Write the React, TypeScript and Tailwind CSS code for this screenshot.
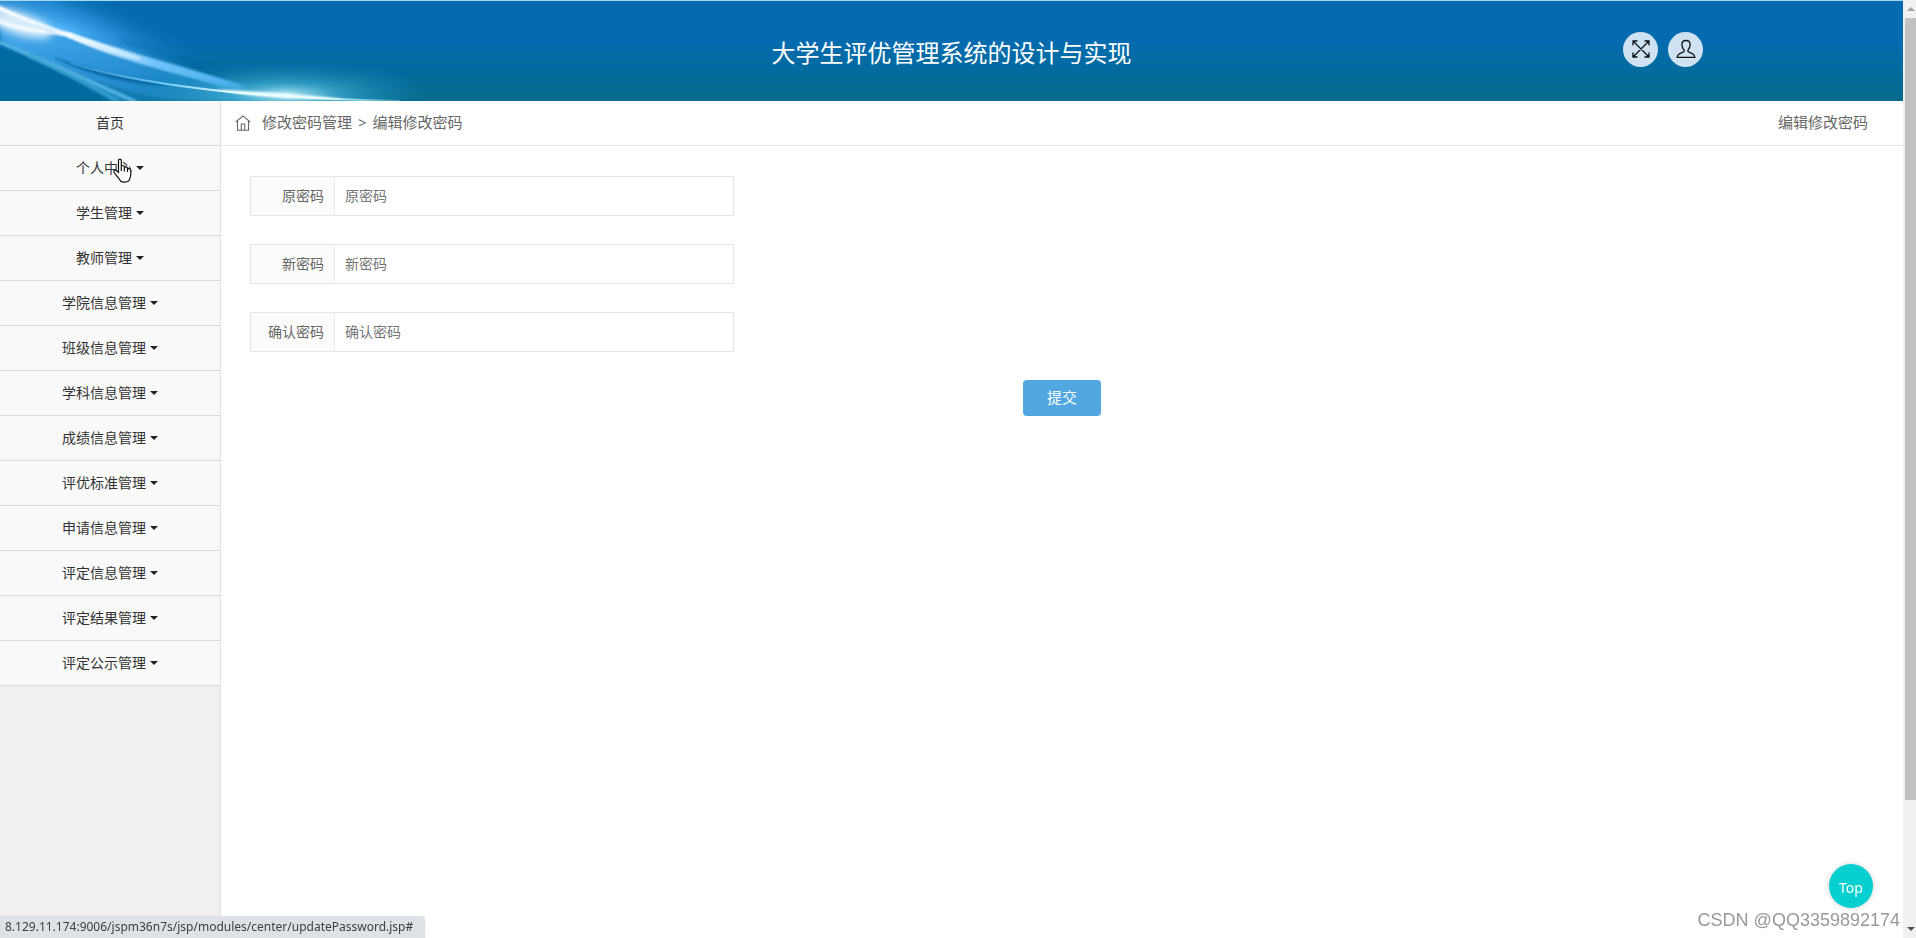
import React, { useState } from "react";

const menus = [
  "个人中心",
  "学生管理",
  "教师管理",
  "学院信息管理",
  "班级信息管理",
  "学科信息管理",
  "成绩信息管理",
  "评优标准管理",
  "申请信息管理",
  "评定信息管理",
  "评定结果管理",
  "评定公示管理",
];

const fields = [
  { id: "old-password", label: "原密码" },
  { id: "new-password", label: "新密码" },
  { id: "confirm-password", label: "确认密码" },
];

function HeaderArt() {
  return (
    <svg className="absolute top-0 left-0" width="600" height="100" viewBox="0 0 600 100" fill="none" aria-hidden="true">
      <defs>
        <radialGradient id="glowA">
          <stop offset="0" stopColor="#55b8ff" stopOpacity="0.95" />
          <stop offset="0.5" stopColor="#3a9fe8" stopOpacity="0.5" />
          <stop offset="1" stopColor="#056bad" stopOpacity="0" />
        </radialGradient>
        <radialGradient id="glowB">
          <stop offset="0" stopColor="#c8f4ff" stopOpacity="0.95" />
          <stop offset="0.35" stopColor="#4ebbe2" stopOpacity="0.6" />
          <stop offset="1" stopColor="#1583b5" stopOpacity="0" />
        </radialGradient>
        <linearGradient id="veil" x1="20" y1="30" x2="280" y2="100" gradientUnits="userSpaceOnUse">
          <stop offset="0" stopColor="#46a8ee" stopOpacity="0.9" />
          <stop offset="0.5" stopColor="#2590d4" stopOpacity="0.75" />
          <stop offset="1" stopColor="#2396c6" stopOpacity="0.6" />
        </linearGradient>
        <linearGradient id="beam" x1="0" y1="0" x2="260" y2="90" gradientUnits="userSpaceOnUse">
          <stop offset="0" stopColor="#ffffff" />
          <stop offset="0.36" stopColor="#e2f5ff" />
          <stop offset="0.6" stopColor="#72c4fb" />
          <stop offset="0.85" stopColor="#4db2ee" />
          <stop offset="1" stopColor="#3ba6d4" stopOpacity="0.5" />
        </linearGradient>
        <linearGradient id="beamLow" x1="60" y1="60" x2="400" y2="100" gradientUnits="userSpaceOnUse">
          <stop offset="0" stopColor="#3ba3e6" stopOpacity="0.4" />
          <stop offset="0.3" stopColor="#6cc8f2" />
          <stop offset="0.55" stopColor="#f4ffff" />
          <stop offset="0.8" stopColor="#c5f2f5" />
          <stop offset="1" stopColor="#6cc6d8" stopOpacity="0.5" />
        </linearGradient>
        <filter id="soft1" x="-20%" y="-20%" width="140%" height="140%"><feGaussianBlur stdDeviation="1" /></filter>
        <filter id="soft2" x="-20%" y="-40%" width="140%" height="180%"><feGaussianBlur stdDeviation="2" /></filter>
        <filter id="soft4" x="-40%" y="-40%" width="180%" height="180%"><feGaussianBlur stdDeviation="4" /></filter>
      </defs>
      <ellipse cx="62" cy="28" rx="170" ry="44" transform="rotate(20 62 28)" fill="url(#glowA)" />
      <path d="M0 20C60 34 140 62 250 90L270 100H110C75 78 35 56 0 42Z" fill="url(#veil)" filter="url(#soft2)" />
      <ellipse cx="18" cy="22" rx="36" ry="11" transform="rotate(18 18 22)" fill="#f4fbff" opacity="0.85" filter="url(#soft4)" />
      <ellipse cx="285" cy="94" rx="150" ry="34" fill="url(#glowB)" />
      <path d="M-6 44C40 62 85 80 124 104H-6Z" fill="#056ba2" opacity="0.8" filter="url(#soft1)" />
      <path d="M55 57C85 67 120 77 170 84C145 85 98 78 55 57Z" fill="#04609c" opacity="0.75" stroke="#04609c" strokeWidth="1" filter="url(#soft1)" />
      <path d="M80 73C110 86 140 93 175 100H140C118 92 100 82 80 73Z" fill="#056a98" opacity="0.4" filter="url(#soft1)" />
      <path d="M120 38C155 50 190 62 225 75" stroke="#0561a2" strokeWidth="4" opacity="0.4" filter="url(#soft2)" />
      <path d="M-4 3C22 16 45 24 70 32C115 47 170 62 250 86C240 90 232 88 225 86C160 69 105 54 68 36C45 27 20 19 -4 8Z" fill="url(#beam)" filter="url(#soft1)" />
      <path d="M68 34C110 50 165 66 240 86" stroke="url(#beam)" strokeWidth="4" filter="url(#soft1)" />
      <path d="M70 33C90 41 115 50 140 58" stroke="#e2f5ff" strokeWidth="2" opacity="0.8" filter="url(#soft1)" />
      <path d="M-4 19C18 29 42 30 72 34" stroke="#ffffff" strokeWidth="4" opacity="0.75" filter="url(#soft1)" />
      <path d="M-4 40C30 53 80 76 136 101" stroke="#5ab9e0" strokeWidth="3" filter="url(#soft1)" />
      <path d="M28 54C62 70 90 84 118 101" stroke="#3aa5d0" strokeWidth="4" opacity="0.8" filter="url(#soft1)" />
      <path d="M70 62C120 78 190 87 240 92C290 96 340 99 400 100" stroke="url(#beamLow)" strokeWidth="2" />
      <path d="M215 88C260 91 300 93 345 98C300 99 250 96 215 88Z" fill="#eaffff" filter="url(#soft1)" />
    </svg>
  );
}

function HomeIcon() {
  return (
    <svg width="16" height="16" viewBox="0 0 16 16" fill="none" stroke="#666" strokeWidth="1.1" aria-hidden="true">
      <path d="M.8 7 8 .9 15.200 7M2.500 5.800v9.500h11V5.800M6.300 15.200V9h3.400v6.200" />
    </svg>
  );
}

function ExpandIcon() {
  return (
    <svg width="18" height="18" viewBox="0 0 18 18" fill="none" stroke="#0b1018" strokeWidth="1.3" aria-hidden="true">
      <path d="M1.500 1.500l15 15M16.500 1.500l-15 15M1 5.500V1h4.500M12.500 1H17v4.500M17 12.500V17h-4.500M5.500 17H1v-4.500" />
    </svg>
  );
}

function UserIcon() {
  return (
    <svg width="20" height="20" viewBox="0 0 20 20" fill="none" stroke="#0b1018" strokeWidth="1.3" strokeLinejoin="round" aria-hidden="true">
      <path d="M10 1.500C7.200 1.500 5.900 3 5.900 5.500C5.900 8 6.800 9.700 8 10.900V12.600C7 14 1.300 13.500 1.200 18.400H18.800C18.700 13.500 13 14 12 12.600V10.900C13.200 9.700 14.100 8 14.100 5.500C14.100 3 12.800 1.500 10 1.500Z" />
    </svg>
  );
}

function HandCursor() {
  return (
    <svg className="pointer-events-none absolute top-3 left-[113px]" width="20" height="26" viewBox="0 0 20 26" fill="#fff" stroke="#111" strokeWidth="1.200" strokeLinejoin="round" aria-hidden="true">
      <path d="M5.500 14.500V2.500C5.500.6 8.300.6 8.300 2.500V8.500C8.600 7 11.200 7.200 11.400 8.900V9.800C11.900 8.400 14.200 8.700 14.500 10.300V11.200C15.200 10 17.800 10.500 17.800 12.500V16C17.800 19.500 16.500 21 15.800 22.800C13.500 24.600 9.500 24.600 7.500 23C6.500 21 4.500 19 3.300 17.300L.9 14C.5 12.500 2.500 11.700 3.600 12.800Z" />
      <path d="M8.300 8.500v4.500M11.400 9.500v4M14.500 11v3" fill="none" />
    </svg>
  );
}

export default function App() {
  const [values, setValues] = useState<Record<string, string>>({});

  return (
    <div className="flex min-h-screen bg-white font-['Noto_Sans','Noto_Sans_CJK_SC',sans-serif] text-sm text-[#666]">
      <div className="flex min-w-0 flex-1 flex-col">
        <header className="relative grid h-[101px] grid-cols-[1fr_auto_1fr] items-center overflow-hidden border-t border-[#a9d8ee] bg-linear-to-b from-[#056bb0] from-40% to-[#056b8c]">
          <HeaderArt />
          <h1 className="relative col-start-2 pt-1 text-2xl leading-8 text-white">大学生评优管理系统的设计与实现</h1>
          <div className="relative flex justify-end gap-2.5 pr-[200px] pb-1">
            <button type="button" aria-label="全屏" className="flex size-[35px] items-center justify-center rounded-full bg-[#cfe2f1]">
              <ExpandIcon />
            </button>
            <button type="button" aria-label="用户" className="flex size-[35px] items-center justify-center rounded-full bg-[#cfe2f1]">
              <UserIcon />
            </button>
          </div>
        </header>

        <div className="flex flex-1">
          <nav className="w-[221px] shrink-0 border-r border-[#e2e2e2] bg-[#f0f0f0] text-[#333]">
            <ul>
              <li className="border-b border-[#d9dadc] bg-[#f9f9f9]">
                <a href="#" className="flex h-11 items-center justify-center">首页</a>
              </li>
              {menus.map((name, i) => (
                <li key={name} className="relative border-b border-[#d9dadc] bg-[#f9f9f9]">
                  <a href="#" className="flex h-11 items-center justify-center gap-1">
                    <span>{name}</span>
                    <span className="border-x-4 border-t-4 border-x-transparent border-t-[#222]" />
                  </a>
                  {i === 0 && <HandCursor />}
                </li>
              ))}
            </ul>
          </nav>

          <main className="min-w-0 flex-1">
            <div className="flex h-[45px] items-center justify-between border-b border-[#e4e4e4] pr-[35px] pl-3.5 text-[15px]">
              <div className="flex items-center">
                <HomeIcon />
                <a href="#" className="ml-[11px]">修改密码管理</a>
                <span className="mx-1.5">&gt;</span>
                <span>编辑修改密码</span>
              </div>
              <span>编辑修改密码</span>
            </div>

            <form className="px-[29px] pt-[30px]" onSubmit={(e) => e.preventDefault()}>
              <div className="flex flex-col gap-7">
                {fields.map((f) => (
                  <div key={f.id} className="flex h-10 w-[484px] border border-[#e6e6e6]">
                    <label htmlFor={f.id} className="flex w-[84px] items-center justify-end border-r border-[#e6e6e6] bg-[#fbfbfb] pr-2.5">
                      {f.label}
                    </label>
                    <input
                      id={f.id}
                      type="password"
                      placeholder={f.label}
                      value={values[f.id] ?? ""}
                      onChange={(e) => setValues({ ...values, [f.id]: e.target.value })}
                      className="min-w-0 flex-1 px-2.5 outline-none placeholder:text-[#757575]"
                    />
                  </div>
                ))}
              </div>
              <div className="mt-7 flex justify-center">
                <button type="submit" className="h-9 w-[78px] rounded bg-[#51a7df] text-[15px] text-white">提交</button>
              </div>
            </form>
          </main>
        </div>
      </div>

      <div className="flex w-[13px] shrink-0 flex-col items-end bg-[#f1f1f1]" aria-hidden="true">
        <div className="flex h-[18px] w-[11px] items-center justify-center">
          <span className="border-x-4 border-b-4 border-x-transparent border-b-[#a3a3a3]" />
        </div>
        <div className="w-[11px] flex-[782] bg-[#c1c1c1]" />
        <div className="flex-[120]" />
        <div className="flex h-[18px] w-[11px] items-center justify-center">
          <span className="border-x-4 border-t-4 border-x-transparent border-t-[#505050]" />
        </div>
      </div>

      <button type="button" className="fixed right-[43px] bottom-[30px] size-11 rounded-full bg-[#06cfcf] pt-1 text-white shadow-[0_0_5px_rgba(0,0,0,0.2)]">
        Top
      </button>
      <div className="fixed right-4 bottom-1.5 font-['Liberation_Sans',sans-serif] text-lg leading-6 text-[#999] [text-shadow:1px_1px_0_#fff]">
        CSDN @QQ3359892174
      </div>
      <div className="fixed bottom-0 left-0 flex h-[22px] items-center rounded-tr-sm bg-[#dee1e6] pr-3 pl-[5px] text-xs text-[#3c4043] shadow-sm">
        8.129.11.174:9006/jspm36n7s/jsp/modules/center/updatePassword.jsp#
      </div>
    </div>
  );
}
